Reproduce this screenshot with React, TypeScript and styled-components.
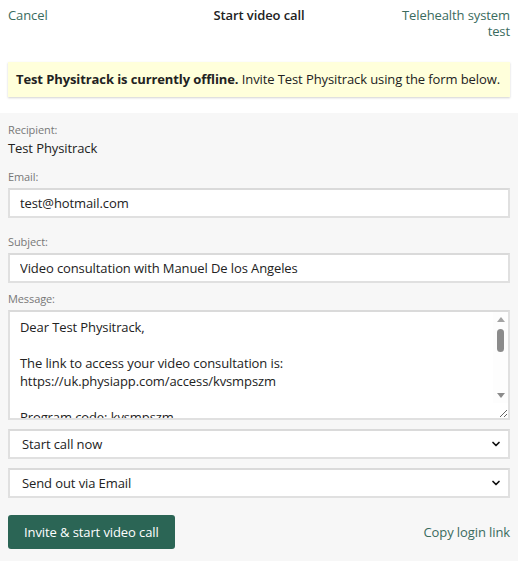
import styled, { createGlobalStyle } from 'styled-components';
import { ChevronDown } from 'lucide-react';

const GlobalStyle = createGlobalStyle`
    html, body {
        margin: 0;
        padding: 0;
        background: #fff;
    }
    body {
        font-family: 'Open Sans', 'Liberation Sans', sans-serif;
        font-size: 13px;
        letter-spacing: -0.1px;
        color: #222;
    }
`;

const green = '#3a6b5e';

const Page = styled.div`
    width: 518px;
    display: flex;
    flex-direction: column;
`;

const Header = styled.header`
    display: grid;
    grid-template-columns: 1fr auto 1fr;
    align-items: start;
    padding: 7px 8px 0;
    line-height: 16px;
    height: 40px;
`;

const HeaderLink = styled.a<{ $right?: boolean }>`
    color: ${green};
    text-decoration: none;
    cursor: pointer;
    text-align: ${(p) => (p.$right ? 'right' : 'left')};
    justify-self: ${(p) => (p.$right ? 'end' : 'start')};
    max-width: 110px;
`;

const Title = styled.h1`
    margin: 0;
    font-size: 13px;
    font-weight: 600;
    color: #222;
`;

const Notice = styled.div`
    margin: 15px 8px 16px;
    padding: 9px 8px;
    line-height: 17px;
    white-space: nowrap;
    background: #ffffdb;
    box-shadow: 0 1px 2px rgba(0, 0, 0, 0.18);

    strong {
        font-weight: 700;
    }
`;

const Panel = styled.section`
    background: #f7f7f7;
    padding: 9px 8px 12px;
    display: flex;
    flex-direction: column;
`;

const Field = styled.div<{ $gap?: number }>`
    display: flex;
    flex-direction: column;
    margin-bottom: ${(p) => p.$gap ?? 0}px;
`;

const Label = styled.label`
    font-size: 11px;
    line-height: 16px;
    color: #777;
    margin-bottom: 3px;
`;

const Value = styled.div`
    line-height: 16px;
    margin-top: -1px;
`;

const boxBorder = `
    box-sizing: border-box;
    display: block;
    width: 100%;
    border: 2px solid #e0e0e0;
    border-top-color: #dadada;
    background: #fff;
    font: inherit;
    letter-spacing: inherit;
    color: #222;
    outline: none;
    margin: 0;
`;

const TextInput = styled.input`
    ${boxBorder}
    height: 30px;
    padding: 0 10px;
`;

const MessageWrap = styled.div`
    position: relative;
`;

const MessageBox = styled.textarea`
    ${boxBorder}
    height: 110px;
    padding: 6px 25px 6px 10px;
    line-height: 18px;
    overflow-y: scroll;
    resize: vertical;
    scrollbar-width: none;
`;

/* drawn scrollbar laid over the textarea's right edge */
const Scrollbar = styled.div`
    position: absolute;
    top: 2px;
    right: 2px;
    bottom: 17px;
    width: 15px;
    background: #fdfdfd;
    display: flex;
    flex-direction: column;
    align-items: center;
    pointer-events: none;
`;

const ArrowBox = styled.div`
    height: 15px;
    width: 15px;
    display: flex;
    align-items: center;
    justify-content: center;
`;

const Thumb = styled.div`
    margin-top: 2px;
    width: 7px;
    height: 23px;
    border-radius: 4px;
    background: #8b8b8b;
`;

const Spacer = styled.div`
    flex: 1;
`;

const SelectWrap = styled.div`
    position: relative;
    margin-top: 9px;
`;

const Select = styled.select`
    ${boxBorder}
    appearance: none;
    height: 30px;
    padding: 0 10px 0 12px;
`;

const Chevron = styled(ChevronDown)`
    position: absolute;
    right: 8px;
    top: 9px;
    pointer-events: none;
    color: #111;
`;

const Actions = styled.div`
    display: flex;
    align-items: center;
    justify-content: space-between;
    margin-top: 17px;
`;

const PrimaryButton = styled.button`
    height: 34px;
    padding: 0 16px;
    border: none;
    border-radius: 3px;
    background: #2b6555;
    color: #fff;
    font: inherit;
    letter-spacing: inherit;
    cursor: pointer;
`;

const TextLink = styled.a`
    color: ${green};
    text-decoration: none;
    cursor: pointer;
`;

const message = `Dear Test Physitrack,

The link to access your video consultation is:
https://uk.physiapp.com/access/kvsmpszm

Program code: kvsmpszm

Kind regards,
Manuel De los Angeles`;

function Arrow({ up }: { up?: boolean }) {
    return (
        <ArrowBox>
            <svg width="8" height="5" viewBox="0 0 8 5">
                <path d={up ? 'M0 5 L4 0 L8 5 Z' : 'M0 0 L8 0 L4 5 Z'} fill={up ? '#a3a3a3' : '#8b8b8b'} />
            </svg>
        </ArrowBox>
    );
}

export default function App() {
    return (
        <Page>
            <GlobalStyle />
            <Header>
                <HeaderLink>Cancel</HeaderLink>
                <Title>Start video call</Title>
                <HeaderLink $right>Telehealth system test</HeaderLink>
            </Header>
            <Notice>
                <strong>Test Physitrack is currently offline.</strong> Invite Test Physitrack using the form below.
            </Notice>
            <Panel>
                <Field $gap={13}>
                    <Label>Recipient:</Label>
                    <Value>Test Physitrack</Value>
                </Field>
                <Field $gap={16}>
                    <Label>Email:</Label>
                    <TextInput defaultValue="test@hotmail.com" />
                </Field>
                <Field $gap={8}>
                    <Label>Subject:</Label>
                    <TextInput defaultValue="Video consultation with Manuel De los Angeles" />
                </Field>
                <Field>
                    <Label>Message:</Label>
                    <MessageWrap>
                        <MessageBox defaultValue={message} />
                        <Scrollbar>
                            <Arrow up />
                            <Thumb />
                            <Spacer />
                            <Arrow />
                        </Scrollbar>
                    </MessageWrap>
                </Field>
                <SelectWrap>
                    <Select defaultValue="now">
                        <option value="now">Start call now</option>
                        <option value="later">Schedule for later</option>
                    </Select>
                    <Chevron size={12} strokeWidth={3.5} />
                </SelectWrap>
                <SelectWrap>
                    <Select defaultValue="email">
                        <option value="email">Send out via Email</option>
                        <option value="sms">Send out via SMS</option>
                    </Select>
                    <Chevron size={12} strokeWidth={3.5} />
                </SelectWrap>
                <Actions>
                    <PrimaryButton>Invite &amp; start video call</PrimaryButton>
                    <TextLink>Copy login link</TextLink>
                </Actions>
            </Panel>
        </Page>
    );
}
